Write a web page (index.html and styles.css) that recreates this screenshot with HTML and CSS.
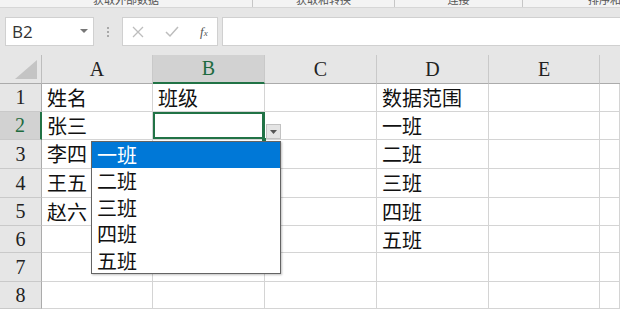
FILE: index.html
```html
<!DOCTYPE html>
<html lang="zh-CN">
<head>
    <meta charset="UTF-8">
    <title>数据验证下拉列表</title>
    <link rel="stylesheet" href="styles.css">
</head>
<body>
    <div class="ribbon">
        <div class="group g1"><span>获取外部数据</span></div>
        <div class="group g2"><span>获取和转换</span></div>
        <div class="group g3"><span>连接</span></div>
        <div class="group g4"><span>排序和筛选</span></div>
    </div>
    <div class="fbar">
        <div class="namebox">
            <span>B2</span>
            <svg width="8" height="5" viewBox="0 0 8 5"><path d="M0 0 L8 0 L4 4 Z" fill="#777"/></svg>
        </div>
        <div class="grip">
            <i></i><i></i><i></i>
        </div>
        <div class="fbtns">
            <svg width="12" height="12" viewBox="0 0 12 12"><path d="M1 1 L11 11 M11 1 L1 11" stroke="#bdbdbd" stroke-width="1.3" fill="none"/></svg>
            <svg width="14" height="12" viewBox="0 0 14 12"><path d="M1 6 L5 10 L13 1" stroke="#bdbdbd" stroke-width="1.5" fill="none"/></svg>
            <span class="fx">f<sub>x</sub></span>
        </div>
        <div class="finput"></div>
    </div>

    <div class="sheet">
        <div class="corner"><svg width="22" height="19" viewBox="0 0 22 19"><path d="M22 0 L22 19 L0 19 Z" fill="#c4c4c4"/></svg></div>
        <div class="colhead">A</div>
        <div class="colhead sel">B</div>
        <div class="colhead">C</div>
        <div class="colhead">D</div>
        <div class="colhead">E</div>
        <div class="colhead last"></div>

        <div class="rowhead">1</div>
        <div class="cell">姓名</div>
        <div class="cell">班级</div>
        <div class="cell"></div>
        <div class="cell">数据范围</div>
        <div class="cell"></div>
        <div class="cell"></div>

        <div class="rowhead sel">2</div>
        <div class="cell">张三</div>
        <div class="cell active"></div>
        <div class="cell"></div>
        <div class="cell">一班</div>
        <div class="cell"></div>
        <div class="cell"></div>

        <div class="rowhead">3</div>
        <div class="cell">李四</div>
        <div class="cell"></div>
        <div class="cell"></div>
        <div class="cell">二班</div>
        <div class="cell"></div>
        <div class="cell"></div>

        <div class="rowhead">4</div>
        <div class="cell">王五</div>
        <div class="cell"></div>
        <div class="cell"></div>
        <div class="cell">三班</div>
        <div class="cell"></div>
        <div class="cell"></div>

        <div class="rowhead">5</div>
        <div class="cell">赵六</div>
        <div class="cell"></div>
        <div class="cell"></div>
        <div class="cell">四班</div>
        <div class="cell"></div>
        <div class="cell"></div>

        <div class="rowhead">6</div>
        <div class="cell"></div>
        <div class="cell"></div>
        <div class="cell"></div>
        <div class="cell">五班</div>
        <div class="cell"></div>
        <div class="cell"></div>

        <div class="rowhead">7</div>
        <div class="cell"></div>
        <div class="cell"></div>
        <div class="cell"></div>
        <div class="cell"></div>
        <div class="cell"></div>
        <div class="cell"></div>

        <div class="rowhead">8</div>
        <div class="cell"></div>
        <div class="cell"></div>
        <div class="cell"></div>
        <div class="cell"></div>
        <div class="cell"></div>
        <div class="cell"></div>

        <!-- 下拉按钮和列表 -->
        <div class="dd-button">
            <svg width="7" height="4" viewBox="0 0 7 4"><path d="M0 0 L7 0 L3.5 4 Z" fill="#555"/></svg>
        </div>
        <div class="fill-handle"></div>
        <ul class="dd-list">
            <li class="selected">一班</li>
            <li>二班</li>
            <li>三班</li>
            <li>四班</li>
            <li>五班</li>
        </ul>
    </div>
</body>
</html>
```

FILE: styles.css
```css
body {
    margin: 0;
    width: 620px;
    height: 309px;
    overflow: hidden;
    background-color: #fff;
    font-family: "Liberation Serif", "Noto Sans CJK SC", serif;
}
.ribbon {
    display: flex;
    height: 7px;
    background-color: #f3f3f3;
    border-bottom: 1px solid #d6d6d6;
    overflow: hidden;
}
.group {
    position: relative;
    flex-shrink: 0;
    height: 7px;
    border-right: 1px solid #c6c6c6;
    box-sizing: border-box;
    text-align: center;
    font-family: "Noto Sans CJK SC", sans-serif;
    font-size: 11px;
    color: #555;
    white-space: nowrap;
}
.group span {
    display: block;
    line-height: 11px;
    margin-top: -6px;
}
.g1 { width: 253px; }
.g2 { width: 142px; }
.g3 { width: 128px; }
.g4 {
    flex-shrink: 1;
    flex-grow: 1;
    min-width: 0;
    overflow: hidden;
    border-right: none;
    text-align: left;
    padding-left: 65px;
}
.fbar {
    display: flex;
    align-items: center;
    height: 47px;
    background-color: #e6e6e6;
    padding: 0 0 0 5px;
}
.namebox {
    display: flex;
    align-items: center;
    justify-content: space-between;
    width: 89px;
    height: 29px;
    box-sizing: border-box;
    background-color: #fff;
    border: 1px solid #d0d0d0;
    padding: 0 5px 0 6px;
    font-family: "Open Sans", "Liberation Sans", sans-serif;
    font-size: 17px;
    color: #333;
}
.grip {
    display: flex;
    flex-direction: column;
    gap: 2px;
    width: 28px;
    align-items: center;
}
.grip i {
    display: block;
    width: 2px;
    height: 2px;
    background-color: #a8a8a8;
}
.fbtns {
    display: flex;
    align-items: center;
    gap: 21px;
    width: 96px;
    height: 29px;
    box-sizing: border-box;
    background-color: #fff;
    border: 1px solid #d0d0d0;
    padding-left: 9px;
}
.fx {
    font-family: "Liberation Serif", serif;
    font-style: italic;
    font-size: 13px;
    color: #555;
}
.fx sub {
    font-size: 9px;
    vertical-align: 0;
}
.finput {
    flex-grow: 1;
    height: 29px;
    margin-left: 4px;
    box-sizing: border-box;
    background-color: #fff;
    border: 1px solid #d0d0d0;
    border-right: none;
}
.sheet {
    position: relative;
    display: grid;
    grid-template-columns: 42px 111px 112px 112px 112px 111px 1fr;
    grid-template-rows: 29px 28px 28px 29px 29px 28px 27px 29px 1fr;
    height: 254px;
}
.corner,
.colhead,
.rowhead,
.cell {
    box-sizing: border-box;
    border-right: 1px solid #d4d4d4;
    border-bottom: 1px solid #d4d4d4;
}
.corner {
    display: flex;
    align-items: flex-end;
    justify-content: flex-end;
    padding: 0 4px 4px 0;
    background-color: #e6e6e6;
    border-right: 1px solid #bdbdbd;
    border-bottom: 1px solid #ababab;
}
.colhead {
    display: flex;
    align-items: center;
    justify-content: center;
    background-color: #e6e6e6;
    border-right: 1px solid #c9c9c9;
    border-bottom: 1px solid #ababab;
    font-size: 20px;
    color: #222;
}
.colhead.sel {
    background-color: #d2d2d2;
    color: #1e6b3f;
    border-bottom: 2px solid #217346;
}
.colhead.last {
    border-right: none;
}
.rowhead {
    display: flex;
    align-items: center;
    justify-content: center;
    background-color: #e6e6e6;
    border-right: 1px solid #ababab;
    border-bottom: 1px solid #c9c9c9;
    font-size: 20px;
    color: #222;
}
.rowhead.sel {
    background-color: #d2d2d2;
    color: #1e6b3f;
    border-right: 2px solid #217346;
}
.cell {
    padding-left: 5px;
    font-family: "Noto Sans CJK SC", sans-serif;
    font-size: 20px;
    line-height: 27px;
    color: #111;
    white-space: nowrap;
    overflow: hidden;
}
.cell.active {
    box-shadow: inset 0 0 0 2px #217346;
    border-right-color: #217346;
}
.dd-button {
    position: absolute;
    left: 266px;
    top: 69px;
    width: 15px;
    height: 15px;
    box-sizing: border-box;
    display: flex;
    align-items: center;
    justify-content: center;
    background-color: #e4e4e4;
    border: 1px solid #c2c2c2;
}
.fill-handle {
    position: absolute;
    left: 262px;
    top: 83px;
    width: 4px;
    height: 3px;
    background-color: #217346;
}
.dd-list {
    position: absolute;
    left: 91px;
    top: 86px;
    width: 190px;
    height: 133px;
    box-sizing: border-box;
    margin: 0;
    padding: 0;
    list-style: none;
    background-color: #fff;
    border: 1px solid #646464;
    box-shadow: 1px 1px 2px rgba(0, 0, 0, 0.25);
}
.dd-list li {
    height: 26.4px;
    line-height: 26px;
    padding-left: 5px;
    font-family: "Noto Sans CJK SC", sans-serif;
    font-size: 20px;
    color: #111;
}
.dd-list li.selected {
    background-color: #0078d7;
    color: #fff;
}
```
